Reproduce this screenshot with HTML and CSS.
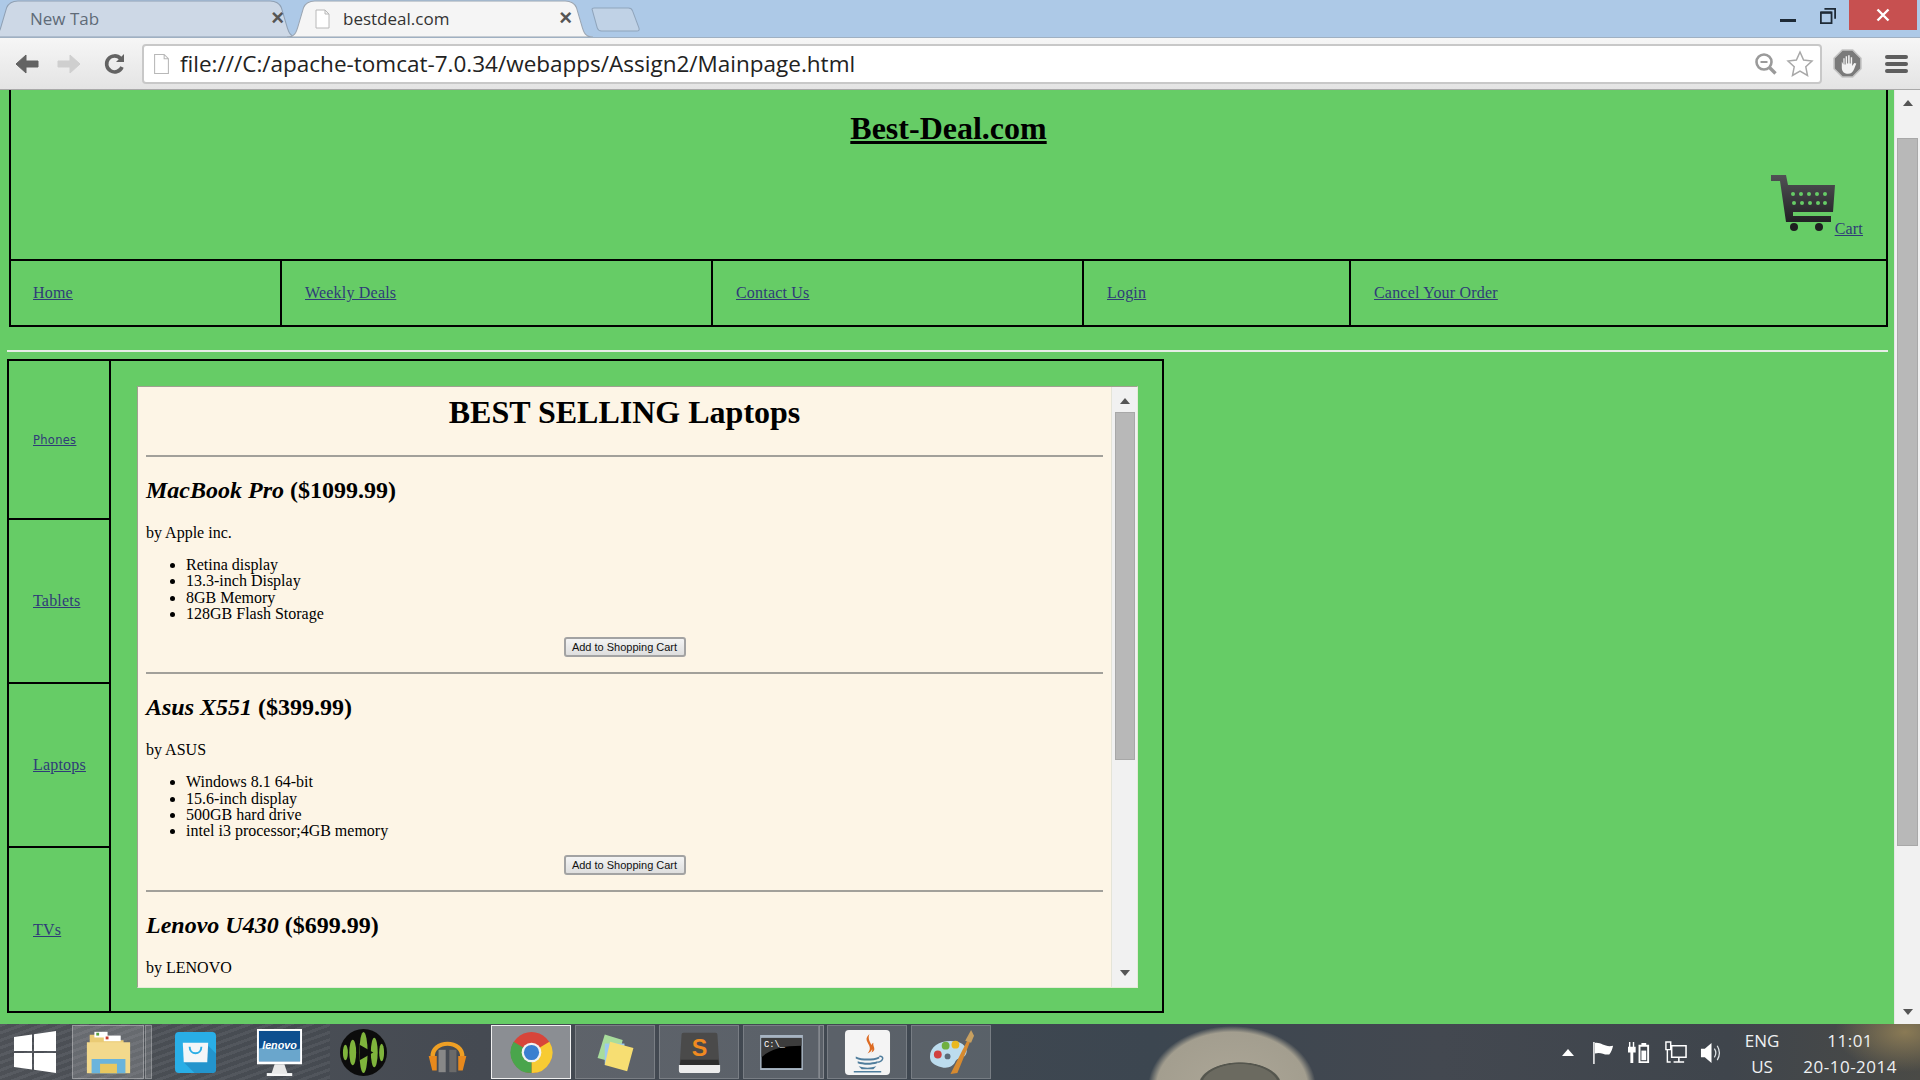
FILE: index.html
```html
<!DOCTYPE html>
<html lang="en">
<head>
    <meta charset="UTF-8">
    <title>bestdeal.com</title>
    <link rel="stylesheet" href="styles.css">
</head>
<body>
<div class="screen">

    <!-- window title bar with tabs -->
    <div class="tabstrip">
        <div class="tab tab-idle">
            <svg class="tab-shape" viewBox="0 0 300 38" preserveAspectRatio="none"><path d="M1 38 C8 38 10 34 12 26 L17 8 C19 3 22 1 28 1 L272 1 C278 1 281 3 283 8 L288 26 C290 34 292 38 299 38Z" fill="#cdd8e6" stroke="#8fa0b4"/></svg>
            <span class="tab-title">New Tab</span>
            <span class="tab-close">×</span>
        </div>
        <div class="tab tab-active">
            <svg class="tab-shape" viewBox="0 0 300 38" preserveAspectRatio="none"><path d="M1 38 C8 38 10 34 12 26 L17 8 C19 3 22 1 28 1 L272 1 C278 1 281 3 283 8 L288 26 C290 34 292 38 299 38Z" fill="#f5f5f5" stroke="#9aa5b2"/></svg>
            <svg class="page-icon" viewBox="0 0 16 20"><path d="M1.5 1h9l4 4v14h-13z M10.5 1v4h4" fill="#fff" stroke="#b8b8b8"/></svg>
            <span class="tab-title">bestdeal.com</span>
            <span class="tab-close">×</span>
        </div>
        <svg class="new-tab" viewBox="0 0 48 24" preserveAspectRatio="none"><path d="M1 2 Q1 1 3 1 L36 1 Q39 1 40 4 L46 20 Q47 23 44 23 L10 23 Q7 23 6 20Z" fill="#c0d2e6" stroke="#90a5bc"/></svg>
        <div class="window-btns">
            <svg class="win-min" viewBox="0 0 16 3"><rect width="16" height="3" fill="#1e2a36"/></svg>
            <svg class="win-max" viewBox="0 0 18 18"><path d="M5 1h12v11M1 5h12v12H1z" fill="none" stroke="#1e2a36" stroke-width="2"/><rect x="1" y="4" width="12" height="2.5" fill="#1e2a36"/></svg>
            <div class="win-close"><svg viewBox="0 0 14 14"><path d="M1.5 1.5l11 11M12.5 1.5l-11 11" stroke="#fff" stroke-width="2.4"/></svg></div>
        </div>
    </div>

    <!-- toolbar -->
    <div class="toolbar">
        <svg class="nav-icon" viewBox="0 0 24 24"><path d="M1 12l10-9v6h12v6H11v6z" fill="#636363" stroke="#636363" stroke-linejoin="round"/></svg>
        <svg class="nav-icon" viewBox="0 0 24 24"><path d="M23 12l-10-9v6H1v6h12v6z" fill="#cfcfcf" stroke="#cfcfcf" stroke-linejoin="round"/></svg>
        <svg class="nav-icon" viewBox="0 0 24 24"><path d="M19 15a8 8 0 1 1-1.5-8.5" fill="none" stroke="#636363" stroke-width="3.6"/><path d="M21 2v8h-8z" fill="#636363"/></svg>
        <div class="omnibox">
            <svg class="page-icon" viewBox="0 0 16 20"><path d="M1.5 1h9l4 4v14h-13z M10.5 1v4h4" fill="#fff" stroke="#b8b8b8"/></svg>
            <span class="url">file:///C:/apache-tomcat-7.0.34/webapps/Assign2/Mainpage.html</span>
            <svg class="zoom-icon" viewBox="0 0 24 24"><circle cx="10" cy="10" r="7.5" fill="none" stroke="#9a9a9a" stroke-width="2.6"/><path d="M6.500 10h7" stroke="#9a9a9a" stroke-width="2"/><path d="M15.500 15.500l6 6" stroke="#9a9a9a" stroke-width="3.400"/></svg>
            <svg class="star-icon" viewBox="0 0 28 28"><path d="M14 2l3.600 8 8.400 1-6.200 5.800 1.700 8.700L14 21l-7.500 4.500 1.700-8.700L2 11l8.400-1z" fill="#fff" stroke="#a8a8a8" stroke-width="1.500"/></svg>
        </div>
        <svg class="adblock" viewBox="0 0 28 28"><path d="M9 1h10l8 8v10l-8 8H9l-8-8V9z" fill="#7a7a7a" stroke="#c4c4c4" stroke-width="1.500"/><path d="M8.500 12v6c0 4 3 6 6 6s5-2 6-5l2-5-2-.5-2 3V8h-1.400v6h-1V6h-1.500v8h-1V7h-1.400v8h-1V9H10v6z" fill="#f2f2f2"/></svg>
        <div class="menu-icon"><i></i><i></i><i></i></div>
    </div>

    <!-- the page itself -->
    <div class="viewport">
        <div class="page">
            <div class="site-header">
                <div class="brand"><a href="#">Best-Deal.com</a></div>
                <div class="cart">
                    <svg class="cart-icon" viewBox="0 0 64 56">
                        <defs><linearGradient id="cartfill" x1="0" y1="0" x2="0" y2="1"><stop offset="0" stop-color="#515155"/><stop offset="1" stop-color="#212124"/></linearGradient></defs>
                        <path d="M0 0h15l2 10h47l-2 27H22v4h38v6H15L9 6H0z" fill="url(#cartfill)"/>
                        <g fill="#66cc66"><circle cx="22" cy="19" r="2"/><circle cx="30" cy="19" r="2"/><circle cx="38" cy="19" r="2"/><circle cx="46" cy="19" r="2"/><circle cx="54" cy="19" r="2"/><circle cx="23" cy="28" r="2"/><circle cx="31" cy="28" r="2"/><circle cx="39" cy="28" r="2"/><circle cx="47" cy="28" r="2"/><circle cx="54" cy="28" r="2"/></g>
                        <circle cx="23" cy="52" r="4" fill="#1e1e20"/><circle cx="48" cy="52" r="4" fill="#1e1e20"/>
                    </svg>
                    <a href="#">Cart</a>
                </div>
            </div>
            <div class="main-nav">
                <div class="nav-cell nav-home"><a href="#">Home</a></div>
                <div class="nav-cell nav-deals"><a href="#">Weekly Deals</a></div>
                <div class="nav-cell nav-contact"><a href="#">Contact Us</a></div>
                <div class="nav-cell nav-login"><a href="#">Login</a></div>
                <div class="nav-cell nav-cancel"><a href="#">Cancel Your Order</a></div>
            </div>
            <hr class="page-rule">
            <div class="catalog">
                <div class="side-menu">
                    <div class="side-cell"><a class="small-link" href="#">Phones</a></div>
                    <div class="side-cell"><a href="#">Tablets</a></div>
                    <div class="side-cell"><a href="#">Laptops</a></div>
                    <div class="side-cell"><a href="#">TVs</a></div>
                </div>
                <div class="frame-wrap">
                    <div class="frame">
                        <div class="frame-body">
                            <h1>BEST SELLING Laptops</h1>
                            <hr>
                            <h2><em>MacBook Pro</em> ($1099.99)</h2>
                            <p>by Apple inc.</p>
                            <ul>
                                <li>Retina display</li>
                                <li>13.3-inch Display</li>
                                <li>8GB Memory</li>
                                <li>128GB Flash Storage</li>
                            </ul>
                            <div class="buy"><button>Add to Shopping Cart</button></div>
                            <hr>
                            <h2><em>Asus X551</em> ($399.99)</h2>
                            <p>by ASUS</p>
                            <ul>
                                <li>Windows 8.1 64-bit</li>
                                <li>15.6-inch display</li>
                                <li>500GB hard drive</li>
                                <li>intel i3 processor;4GB memory</li>
                            </ul>
                            <div class="buy"><button>Add to Shopping Cart</button></div>
                            <hr>
                            <h2><em>Lenovo U430</em> ($699.99)</h2>
                            <p>by LENOVO</p>
                        </div>
                        <div class="scrollbar frame-scroll">
                            <span class="arrow-up"></span>
                            <div class="thumb"></div>
                            <span class="arrow-down"></span>
                        </div>
                    </div>
                </div>
            </div>
        </div>
        <div class="scrollbar page-scroll">
            <span class="arrow-up"></span>
            <div class="thumb"></div>
            <span class="arrow-down"></span>
        </div>
    </div>

    <!-- windows taskbar -->
    <div class="taskbar">
        <svg class="start" viewBox="0 0 42 42"><path d="M0 6l18-2.500V20H0zM20 3.200L42 0v20H20zM0 22h18v16.500L0 36zM20 22h22v20l-22-3.200z" fill="#fff"/></svg>
        <div class="task task-explorer">
            <svg viewBox="0 0 50 50"><path d="M5 6h16v6h20v8H5z" fill="#eacb74"/><rect x="10" y="3" width="14" height="6" fill="#fff"/><rect x="20" y="7" width="18" height="6" fill="#fff"/><rect x="12" y="4" width="3" height="3" fill="#5aa040"/><rect x="22" y="8" width="3" height="3" fill="#c83a30"/><path d="M2 14h46v33H2z" fill="#f3d98c"/><path d="M7 32h36v15H7z" fill="#6ab4dc"/><path d="M16 37h18v10H16z" fill="#e9c860"/></svg>
        </div>
        <div class="task-sep"></div>
        <div class="task"><svg class="icon-small" viewBox="0 0 44 44"><rect width="42" height="42" x="1" y="1" rx="4" fill="#29aee6"/><path d="M32 12l11 11v16a4 4 0 0 1-4 4H21L10 32z" fill="#2394cc"/><path d="M9 12h26l-1 20H10z" fill="#f3f6f8"/><path d="M16 16c0 9 12 9 12 0" fill="none" stroke="#29aee6" stroke-width="2"/></svg></div>
        <div class="task"><svg viewBox="0 0 48 48"><path d="M1 0h46v36H1z" fill="#fff"/><rect x="3" y="2" width="42" height="31" fill="#0e4f8f"/><path d="M3 20c14-5 28 5 42 0v13H3z" fill="#6aa6cc"/><text x="24" y="20" class="lenovo-text">lenovo</text><path d="M19 36h10l3 9H16z" fill="#e8e8e8"/><path d="M11 45h26v3H11z" fill="#f6f6f6"/></svg></div>
        <div class="task"><svg viewBox="0 0 48 48"><circle cx="24" cy="24" r="24" fill="#0c0c0c"/><g fill="#7fb43c"><ellipse cx="5.500" cy="24" rx="2.500" ry="8"/><ellipse cx="13" cy="24" rx="3.500" ry="13"/><ellipse cx="24" cy="24" rx="4.200" ry="21"/><ellipse cx="35" cy="24" rx="3.500" ry="15"/><ellipse cx="42.500" cy="24" rx="2.500" ry="9"/></g><path d="M20 16l14 8-14 8z" fill="#0c0c0c"/></svg></div>
        <div class="task"><svg class="icon-small" viewBox="0 0 48 48"><path d="M5 30C3 6 45 6 43 30h-5C40 12 8 12 10 30z" fill="#ee9f24"/><path d="M3 28h9v16H7zM45 28h-9v16h5z" fill="#e8891c"/><rect x="14" y="21" width="8" height="25" fill="#888"/><rect x="26" y="21" width="8" height="25" fill="#6a6a6a"/></svg></div>
        <div class="task box active"><svg class="icon-small" viewBox="0 0 48 48"><circle cx="24" cy="24" r="23" fill="#d8453a"/><path d="M24 24L44 12A23 23 0 0 1 24 47z" fill="#f7cb33"/><path d="M24 24L24 47A23 23 0 0 1 4 12z" fill="#4aa54c"/><circle cx="24" cy="24" r="11" fill="#f2f2f2"/><circle cx="24" cy="24" r="8.500" fill="#3b7fd0"/></svg></div>
        <div class="task box"><svg class="icon-small" viewBox="0 0 48 48"><path d="M12 4l20 6-6 26L4 30z" fill="#a8dc9c"/><path d="M12 14h22v24H12z" fill="#9cc8ee"/><path d="M18 12l26 7-7 26-25-7z" fill="#f7de72"/></svg></div>
        <div class="task box"><svg class="icon-small" viewBox="0 0 48 48"><path d="M1 38h46v6a3 3 0 0 1-3 3H4a3 3 0 0 1-3-3z" fill="#ececec"/><path d="M6 2h36a2 2 0 0 1 2 2l2 32a2 2 0 0 1-2 2H4a2 2 0 0 1-2-2L4 4a2 2 0 0 1 2-2z" fill="#4a4a4a"/><path d="M3 32h42l1 6H2z" fill="#2d2d2d"/><text x="24" y="28" class="sublime-text">S</text></svg></div>
        <div class="task box console-task"><svg viewBox="0 0 44 36"><rect width="44" height="36" fill="#a7b4c2"/><rect x="1.500" y="3" width="41" height="31" fill="#000"/><path d="M1.500 3h41v8c-18 0-32 3-41 12z" fill="#3c3c3c"/><text x="4" y="12" class="console-text">C:\_</text></svg></div>
        <div class="task-sep thin"></div>
        <div class="task box"><svg viewBox="0 0 48 48"><rect x="1" y="1" width="46" height="46" rx="4" fill="#f4f4f4"/><path d="M26 5c-9 8 6 11-2 20 12-6-2-11 2-20zM30 14c-5 3 1 6-2 10 6-3 1-6 2-10z" fill="#dd6b22"/><path d="M12 28c6 3 18 3 24 0v2c-6 3-18 3-24 0zM14 33c6 2 14 2 20 0v2c-6 2-14 2-20 0zM15 38c6 2 12 2 18 0l-3 3H18zM10 43h28v1.500H10z" fill="#4f7d9c"/><path d="M36 28c5-1 5 5-2 6" fill="none" stroke="#4f7d9c" stroke-width="1.500"/></svg></div>
        <div class="task box"><svg viewBox="0 0 48 48"><path d="M2 28c0-12 14-18 28-15 8 2 12 9 8 14-4 4-8 2-10 6-2 5-8 8-14 6C6 37 2 34 2 28z" fill="#bcdcee"/><circle cx="10" cy="26" r="4" fill="#d04040"/><circle cx="18" cy="17" r="4" fill="#70b040"/><circle cx="28" cy="16" r="4" fill="#eab820"/><circle cx="20" cy="28" r="3" fill="#5a6a78"/><path d="M23 46L40 12l3 1-13 32z" fill="#d68a30"/><path d="M38 12L44 1l3 6-3 7z" fill="#c8a060"/></svg></div>

        <div class="tray">
            <svg class="tray-up" viewBox="0 0 12 7"><path d="M6 0l6 7H0z" fill="#fff"/></svg>
            <svg class="tray-icon" viewBox="0 0 24 24"><path d="M2 1v23" stroke="#fff" stroke-width="1.500"/><path d="M3 2c7-1 10 5 19 3-1 4-2 7-4 9-6 1-8-3-15-1z" fill="#fff"/></svg>
            <svg class="tray-icon" viewBox="0 0 24 24"><path d="M1 1h1.500v5H5V1h1.500v5H8v6H5.500v11h-3V12H0V6h1z" fill="#fff"/><path d="M11 4h3V2h5v2h3v19H11z M13 6v15h7V6z" fill="#fff" fill-rule="evenodd"/><rect x="14" y="10" width="5" height="10" fill="#fff"/></svg>
            <svg class="tray-icon" viewBox="0 0 24 24"><path d="M2 1h5v8H2zM3.500 9v13H7" fill="none" stroke="#fff" stroke-width="1.500"/><path d="M8 5h15v12H8zM15.500 17v4M10 22h11" fill="none" stroke="#fff" stroke-width="1.600"/></svg>
            <svg class="tray-icon" viewBox="0 0 24 24"><path d="M1 8h4l7-6v21l-7-6H1z" fill="#fff"/><path d="M15 8c2 3 2 6 0 9M18 5c3 5 3 10 0 15" fill="none" stroke="#dfe3e6" stroke-width="1.300"/></svg>
            <div class="lang"><span>ENG</span><span>US</span></div>
            <div class="clock"><span>11:01</span><span>20-10-2014</span></div>
        </div>
    </div>

</div>
</body>
</html>
```

FILE: styles.css
```css
* {
    box-sizing: border-box;
}
html, body {
    margin: 0;
    padding: 0;
    overflow: hidden;
}
body {
    font-family: "Liberation Serif", serif;
    font-size: 16px;
    color: #000;
}
.screen {
    width: 1920px;
    height: 1080px;
    display: flex;
    flex-direction: column;
    overflow: hidden;
}

/* tabs */
.tabstrip {
    height: 38px;
    flex: none;
    display: flex;
    align-items: flex-end;
    background: #adc9e7;
    font-family: "Open Sans", sans-serif;
    border-bottom: 1px solid #9fb0c2;
}
.tab {
    position: relative;
    height: 37px;
    display: flex;
    align-items: center;
    font-size: 17px;
}
.tab-shape {
    position: absolute;
    left: 0;
    top: 0;
    width: 100%;
    height: 100%;
}
.tab-idle {
    width: 310px;
    margin-left: -11px;
    padding-left: 41px;
    color: #5f6b78;
}
.tab-active {
    width: 308px;
    margin-left: -13px;
    padding-left: 28px;
    color: #333;
}
.tab-title,
.tab .page-icon {
    position: relative;
}
.tab .page-icon {
    width: 17px;
    height: 20px;
    margin-right: 12px;
    flex: none;
}
.tab-close {
    position: absolute;
    top: 6px;
    right: 22px;
    font-family: "Liberation Sans", sans-serif;
    font-size: 22px;
    line-height: 24px;
    font-weight: bold;
    color: #555;
}
.tab-idle .tab-close {
    right: 15px;
}
.new-tab {
    width: 50px;
    height: 25px;
    margin: 0 0 5px -3px;
}
.window-btns {
    margin-left: auto;
    align-self: flex-start;
    display: flex;
    align-items: flex-start;
    margin-right: 3px;
}
.win-min {
    width: 16px;
    height: 3px;
    margin: 19px 23px 0 0;
}
.win-max {
    width: 18px;
    height: 16px;
    margin: 8px 12px 0 0;
}
.win-close {
    width: 68px;
    height: 30px;
    background: #c75050;
    display: flex;
    align-items: center;
    justify-content: center;
}
.win-close svg {
    width: 14px;
    height: 14px;
}

/* toolbar */
.toolbar {
    height: 52px;
    flex: none;
    display: flex;
    align-items: center;
    background: linear-gradient(#f6f6f6, #e4e4e4);
    border-bottom: 1px solid #a9a9a9;
    padding-left: 15px;
}
.nav-icon {
    width: 24px;
    height: 24px;
    margin-right: 18px;
    flex: none;
}
.nav-icon:nth-child(2) {
    margin-right: 22px;
}
.nav-icon:nth-child(3) {
    margin-right: 15px;
}
.omnibox {
    width: 1680px;
    height: 40px;
    flex: none;
    background: #fff;
    border: 2px solid #c8c8c8;
    border-radius: 4px;
    display: flex;
    align-items: center;
    padding-left: 9px;
}
.omnibox .page-icon {
    width: 17px;
    height: 22px;
    margin-right: 10px;
    flex: none;
}
.url {
    font-family: "Open Sans", sans-serif;
    font-size: 22.5px;
    color: #222;
    white-space: nowrap;
}
.zoom-icon {
    width: 24px;
    height: 24px;
    margin-left: auto;
}
.star-icon {
    width: 28px;
    height: 28px;
    margin: 0 6px 0 8px;
}
.adblock {
    width: 29px;
    height: 29px;
    margin-left: 11px;
    flex: none;
}
.menu-icon {
    width: 23px;
    margin-left: 23px;
    flex: none;
    display: flex;
    flex-direction: column;
    gap: 3px;
}
.menu-icon i {
    display: block;
    height: 4px;
    border-radius: 2px;
    background: #5e5e5e;
}

/* page */
.viewport {
    height: 934px;
    flex: none;
    display: flex;
    overflow: hidden;
    background: #66cc66;
}
.page {
    flex: 1;
    min-width: 0;
    padding: 0 6px 0 8px;
}
a {
    color: #2f3b78;
    text-decoration: underline;
    letter-spacing: 0.2px;
}
.site-header {
    height: 173px;
    margin: -4px 0 0 1px;
    border: 2px solid #000;
    border-bottom: 0;
    position: relative;
    padding-top: 22px;
    text-align: center;
}
.brand {
    font-size: 32px;
    font-weight: bold;
    line-height: 37px;
}
.brand a {
    color: #000;
    letter-spacing: 0;
}
.cart {
    position: absolute;
    right: 23px;
    top: 87px;
    display: flex;
    align-items: flex-end;
}
.cart-icon {
    width: 64px;
    height: 56px;
}
.cart a {
    line-height: 16px;
    margin-bottom: -6px;
}
.main-nav {
    display: flex;
    height: 68px;
    margin-left: 1px;
    border: 2px solid #000;
}
.nav-cell {
    display: flex;
    align-items: center;
    padding-left: 23px;
    border-right: 2px solid #000;
}
.nav-home { width: 271px; padding-left: 22px; }
.nav-deals { width: 431px; }
.nav-contact { width: 371px; }
.nav-login { width: 267px; }
.nav-cancel { flex: 1; border-right: 0; }
.page-rule {
    margin: 23px 0 7px -1px;
    border: 0;
    height: 2px;
    background: #e6eee6;
}
.catalog {
    width: 1157px;
    height: 654px;
    margin-left: -1px;
    display: flex;
    border: 2px solid #000;
}
.side-menu {
    width: 102px;
    flex: none;
    display: grid;
    grid-template-rows: 159fr 164fr 164fr 163fr;
    border-right: 2px solid #000;
}
.side-cell {
    display: flex;
    align-items: center;
    padding-left: 24px;
    border-bottom: 2px solid #000;
}
.side-cell:last-child {
    border-bottom: 0;
}
.small-link {
    font-family: "DejaVu Sans", sans-serif;
    font-size: 11.5px;
    letter-spacing: 0.3px;
}
.frame-wrap {
    flex: 1;
    padding: 25px 24px 23px 26px;
}
.frame {
    height: 602px;
    display: flex;
    background: #fdf5e6;
    border-top: 1px solid #a0a090;
    border-left: 1px solid #a0a090;
    border-bottom: 1px solid #e6ead8;
    border-right: 1px solid #e6ead8;
    overflow: hidden;
}
.frame-body {
    flex: 1;
    min-width: 0;
    padding: 0 8px;
    overflow: hidden;
}
.frame-body h1 {
    font-size: 32px;
    line-height: 37px;
    margin: 7px 0 24px;
    text-align: center;
}
.frame-body hr {
    height: 2px;
    border: 0;
    background: #a2a09a;
    margin: 0;
}
.frame-body h2 {
    font-size: 24px;
    line-height: 28px;
    margin: 19px 0 0;
}
.frame-body p {
    margin: 20px 0 0;
    line-height: 18px;
}
.frame-body ul {
    margin: 15px 0 0;
    padding-left: 40px;
    line-height: 16.33px;
}
.buy {
    text-align: center;
    margin: 15px 0;
    line-height: 0;
}
.buy button {
    font-family: "Liberation Sans", sans-serif;
    font-size: 11px;
    width: 122px;
    height: 20px;
    padding: 0;
    color: #111;
    background: linear-gradient(#f4f4f4, #dedede);
    border: 2px solid #a3a3a3;
    border-radius: 3px;
}
.scrollbar {
    flex: none;
    display: flex;
    flex-direction: column;
    align-items: center;
    background: #f1f1f1;
}
.frame-scroll {
    width: 26px;
    border-left: 1px solid #e4e4d8;
    padding-top: 11px;
}
.frame-scroll .thumb {
    width: 20px;
    height: 348px;
    margin-top: 8px;
    background: #b8b8b8;
    border: 1px solid #a8a8a8;
}
.frame-scroll .arrow-down {
    margin-top: auto;
    margin-bottom: 11px;
}
.page-scroll {
    width: 26px;
    padding-top: 10px;
    border-left: 1px solid #e6e6e6;
}
.page-scroll .thumb {
    width: 21px;
    height: 708px;
    margin-top: 32px;
    background: #b8b8b8;
    border: 1px solid #a8a8a8;
}
.page-scroll .arrow-down {
    margin-top: auto;
    margin-bottom: 9px;
}
.arrow-up {
    width: 0;
    height: 0;
    border-left: 5px solid transparent;
    border-right: 5px solid transparent;
    border-bottom: 6px solid #555;
}
.arrow-down {
    width: 0;
    height: 0;
    border-left: 5px solid transparent;
    border-right: 5px solid transparent;
    border-top: 6px solid #555;
}

/* taskbar, wallpaper shows through */
.taskbar {
    flex: 1;
    display: flex;
    align-items: center;
    padding-left: 14px;
    background:
        radial-gradient(ellipse 42px 24px at 1240px 62px, #6b6a60 0 90%, #55564e 93%, #55564e 97%, rgba(85,86,78,0) 100%) no-repeat,
        radial-gradient(ellipse 84px 62px at 1232px 64px, #aca697 0, #a39e8f 90%, rgba(163,158,143,0) 100%) no-repeat,
        radial-gradient(ellipse 70px 40px at 1905px 8px, #8a7a55 0, rgba(90,85,75,0) 100%) no-repeat,
        repeating-linear-gradient(160deg, rgba(255,255,255,0.045) 0 3px, rgba(0,0,0,0.045) 3px 7px) 0 0 / 330px 100% no-repeat,
        linear-gradient(90deg, #50545a, #454a52 25%, #3c4650 60%, #434850 75%, #3f454c 90%, #4a4a46);
}
.start {
    width: 42px;
    height: 42px;
    margin-right: 16px;
    flex: none;
}
.task {
    width: 80px;
    height: 54px;
    display: flex;
    align-items: center;
    justify-content: center;
    margin-right: 4px;
    flex: none;
}
.task svg {
    width: 47px;
    height: 47px;
}
.task svg.icon-small {
    width: 43px;
    height: 43px;
}
.task-explorer {
    width: 72px;
    margin-right: 1px;
    background: rgba(255,255,255,0.16);
    border: 1px solid rgba(255,255,255,0.3);
}
.task-sep {
    width: 7px;
    margin-right: 3px;
    height: 54px;
    flex: none;
    background: rgba(255,255,255,0.14);
    border: 1px solid rgba(255,255,255,0.25);
}
.task-sep.thin {
    width: 5px;
}
.box {
    background: rgba(255,255,255,0.14);
    border: 1px solid rgba(255,255,255,0.18);
}
.box.active {
    background: rgba(255,255,255,0.38);
    border: 1px solid #f0f0f0;
}
.console-task {
    width: 76px;
    margin-right: 0;
}
.task.console-task svg {
    width: 43px;
    height: 35px;
}
.lenovo-text {
    font-family: "Liberation Sans", sans-serif;
    font-size: 11px;
    font-style: italic;
    font-weight: bold;
    fill: #fff;
    text-anchor: middle;
}
.sublime-text {
    font-family: "Liberation Sans", sans-serif;
    font-size: 26px;
    font-weight: bold;
    fill: #f08a20;
    text-anchor: middle;
}
.console-text {
    font-family: "Liberation Mono", monospace;
    font-size: 9px;
    fill: #fff;
}
.tray {
    margin-left: auto;
    display: flex;
    align-items: center;
    padding-right: 23px;
    font-family: "Open Sans", sans-serif;
    font-size: 17px;
    color: #eef0f2;
}
.tray-up {
    width: 12px;
    height: 7px;
    margin-right: 18px;
}
.tray-icon {
    width: 23px;
    height: 23px;
    margin-right: 13px;
}
.lang, .clock {
    display: flex;
    flex-direction: column;
    align-items: center;
    line-height: 26px;
    padding-top: 4px;
}
.clock {
    letter-spacing: 0.5px;
}
.lang {
    margin: 0 24px 0 9px;
}
```
